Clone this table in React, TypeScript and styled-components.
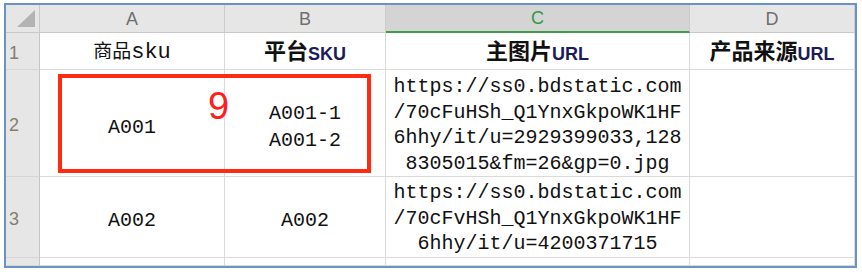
import styled, { createGlobalStyle } from "styled-components";

const GlobalStyle = createGlobalStyle`
  html, body {
    margin: 0;
    padding: 0;
    background: #ffffff;
  }
`;

const Page = styled.div`
  padding: 3px 0 0 4px;
`;

const Sheet = styled.div`
  position: relative;
  display: grid;
  grid-template-columns: 34px 185px 161px 304px 165px;
  grid-template-rows: 28px 37px 107px 81px 8px;
  width: max-content;
  border: 2px solid #6a93c3;
  background: #ffffff;
  font-family: "Liberation Mono", "Noto Sans CJK SC", monospace;
  color: #111111;
`;

const Corner = styled.div`
  display: flex;
  align-items: flex-end;
  justify-content: flex-end;
  padding: 0 4px 5px 0;
  background: #e6e6e6;
  border-right: 1px solid #c9c9c9;
  border-bottom: 1px solid #c9c9c9;
`;

const ColHead = styled.div<{ $active?: boolean }>`
  display: flex;
  align-items: center;
  justify-content: center;
  background: ${(p) => (p.$active ? "#d4d4d4" : "#e6e6e6")};
  border-right: 1px solid #cbcbcb;
  border-bottom: ${(p) => (p.$active ? "2px solid #3f9c4a" : "1px solid #c9c9c9")};
  font-family: "Liberation Sans", Arial, sans-serif;
  font-size: 18px;
  color: ${(p) => (p.$active ? "#2f9a44" : "#6f6f6f")};
  padding-top: 1px;
`;

const RowNum = styled.div`
  display: flex;
  align-items: center;
  padding: 4px 0 0 3px;
  background: #e6e6e6;
  border-right: 1px solid #c6c6c6;
  border-bottom: 1px solid #d6d6d6;
  font-family: "Liberation Sans", Arial, sans-serif;
  font-size: 18px;
  color: #877c70;
`;

const Cell = styled.div<{ $shift?: number }>`
  display: flex;
  align-items: center;
  justify-content: center;
  text-align: center;
  padding-top: ${(p) => p.$shift ?? 0}px;
  border-right: 1px solid #dadada;
  border-bottom: 1px solid #dadada;
  font-size: 20px;
  line-height: 27px;
`;

const Label = styled.div`
  white-space: nowrap;
  line-height: 30px;
`;

const UrlText = styled.div`
  width: 290px;
  line-height: 25.5px;
  word-break: break-all;
  line-break: anywhere;
  text-align: center;
`;

const Plain = styled.span`
  font-family: "Noto Sans CJK SC", sans-serif;
  font-size: 19px;
`;

const Latin = styled.span`
  font-family: "Liberation Mono", monospace;
  font-size: 22px;
`;

const BoldHan = styled.span`
  font-family: "Noto Sans CJK SC", sans-serif;
  font-size: 22px;
  font-weight: 700;
  color: #111111;
`;

const Tag = styled.span`
  font-family: "Liberation Sans", Arial, sans-serif;
  font-size: 18px;
  font-weight: 700;
  color: #1c1c5a;
  vertical-align: -1px;
`;

const Mark = styled.div`
  position: absolute;
  left: 52px;
  top: 69px;
  width: 313px;
  height: 99px;
  box-sizing: border-box;
  border: 4px solid #ff2a12;
  pointer-events: none;
`;

const Count = styled.div`
  position: absolute;
  left: 202px;
  top: 82px;
  font-family: "Liberation Sans", Arial, sans-serif;
  font-size: 38px;
  line-height: 1;
  color: #ff1e1e;
`;

const urls = [
  "https://ss0.bdstatic.com/70cFuHSh_Q1YnxGkpoWK1HF6hhy/it/u=2929399033,1288305015&fm=26&gp=0.jpg",
  "https://ss0.bdstatic.com/70cFvHSh_Q1YnxGkpoWK1HF6hhy/it/u=4200371715",
];

export default function App() {
  return (
    <Page>
      <GlobalStyle />
      <Sheet>
        <Corner>
          <svg width="18" height="17" viewBox="0 0 18 17">
            <polygon points="18,0 18,17 0,17" fill="#b3b3b3" />
          </svg>
        </Corner>
        <ColHead>A</ColHead>
        <ColHead>B</ColHead>
        <ColHead $active>C</ColHead>
        <ColHead>D</ColHead>

        <RowNum>1</RowNum>
        <Cell>
          <Label>
            <Plain>商品</Plain>
            <Latin>sku</Latin>
          </Label>
        </Cell>
        <Cell>
          <Label>
            <BoldHan>平台</BoldHan>
            <Tag>SKU</Tag>
          </Label>
        </Cell>
        <Cell>
          <Label>
            <BoldHan>主图片</BoldHan>
            <Tag>URL</Tag>
          </Label>
        </Cell>
        <Cell>
          <Label>
            <BoldHan>产品来源</BoldHan>
            <Tag>URL</Tag>
          </Label>
        </Cell>

        <RowNum>2</RowNum>
        <Cell $shift={8}>A001</Cell>
        <Cell $shift={8}>
          A001-1
          <br />
          A001-2
        </Cell>
        <Cell $shift={4}>
          <UrlText>{urls[0]}</UrlText>
        </Cell>
        <Cell />

        <RowNum>3</RowNum>
        <Cell $shift={6}>A002</Cell>
        <Cell $shift={6}>A002</Cell>
        <Cell $shift={3}>
          <UrlText>{urls[1]}</UrlText>
        </Cell>
        <Cell />

        <RowNum />
        <Cell />
        <Cell />
        <Cell />
        <Cell />

        <Mark />
        <Count>9</Count>
      </Sheet>
    </Page>
  );
}
